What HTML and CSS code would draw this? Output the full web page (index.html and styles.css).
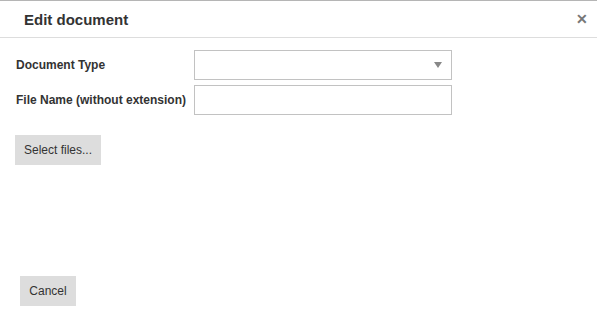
FILE: index.html
```html
<!DOCTYPE html>
<html>
<head>
<meta charset="utf-8">
<link rel="stylesheet" href="styles.css">
</head>
<body>
<div class="dialog">
  <div class="header">
    <span class="title">Edit document</span>
    <span class="close">&#x2715;</span>
  </div>
  <div class="body">
    <div class="form">
      <label class="label">Document Type</label>
      <div class="select"><span class="caret"></span></div>
      <label class="label">File Name (without extension)</label>
      <div class="input"></div>
    </div>
    <button class="btn select-files">Select files...</button>
  </div>
  <div class="footer">
    <button class="btn">Cancel</button>
  </div>
</div>
</body>
</html>
```
FILE: styles.css
```css
* { box-sizing: border-box; }
html, body { margin: 0; padding: 0; background: #fff; }
body { font-family: "Liberation Sans", Arial, sans-serif; color: #333; }
.dialog { width: 597px; height: 336px; border-top: 1px solid #b5b5b5; display: flex; flex-direction: column; }
.header { height: 37px; border-bottom: 1px solid #ddd; display: flex; align-items: center; justify-content: space-between; padding: 0 9px 0 24px; }
.title { font-size: 15px; font-weight: bold; color: #333; }
.close { font-size: 14px; font-weight: bold; color: #777; }
.body { padding: 12px 0 0 15px; flex: 1; }
.form { display: grid; grid-template-columns: 179px 258px; row-gap: 5px; align-items: center; }
.label { font-size: 12px; font-weight: bold; padding-left: 1px; color: #333; }
.select, .input { height: 30px; border: 1px solid #c2c2c2; background: #fff; position: relative; }
.caret { position: absolute; right: 9px; top: 11px; width: 0; height: 0; border-left: 4px solid transparent; border-right: 4px solid transparent; border-top: 6px solid #888; }
.btn { font-family: "Liberation Sans", Arial, sans-serif; font-size: 12px; color: #333; background: #ddd; border: none; height: 30px; padding: 0 8px; display: block; }
.select-files { margin-top: 20px; width: 86px; }
.footer { padding: 0 0 30px 20px; }
.footer .btn { width: 56px; }
```
